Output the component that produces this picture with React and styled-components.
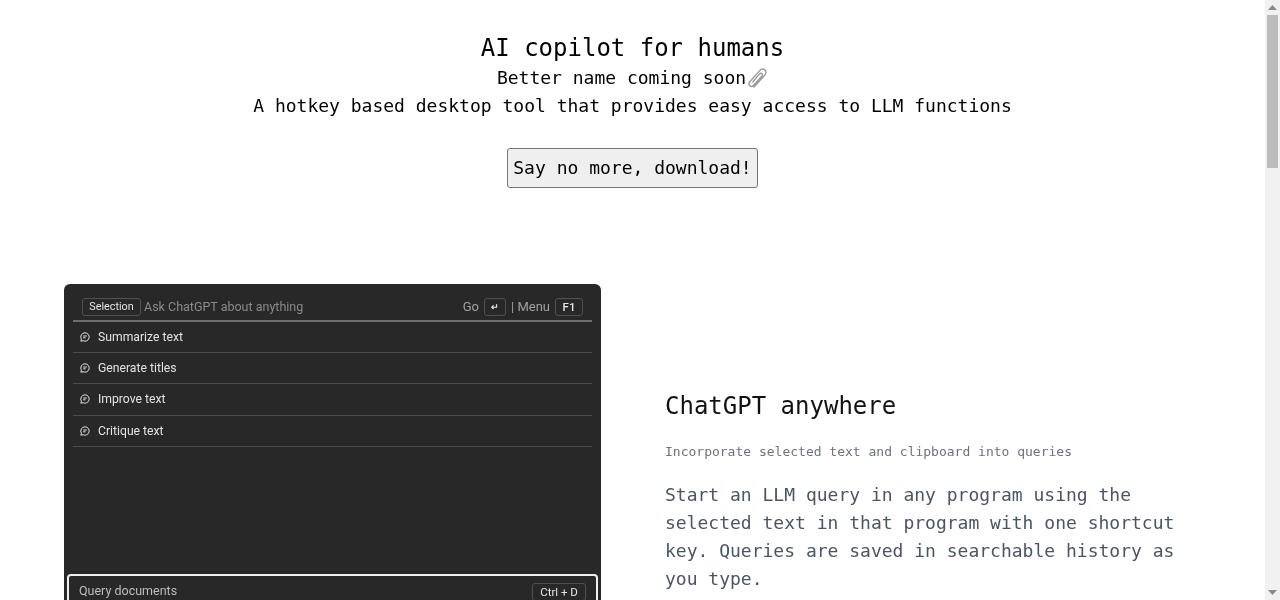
import React from 'react';
import styled, { createGlobalStyle } from 'styled-components';

const GlobalStyle = createGlobalStyle`
  body {
    margin: 0;
    background: #fff;
    font-family: "DejaVu Sans Mono", monospace;
  }
`;

// own layer so text gets greyscale antialiasing like the reference
const Page = styled.main`
  min-height: 2235px;
  padding-right: 15px;
  will-change: transform;
`;

// the page is taller than the window, so the scrollbar is part of the picture
const ScrollTrack = styled.div`
  position: fixed;
  top: 0;
  right: 0;
  bottom: 0;
  width: 15px;
  background: #f1f1f1;
  display: flex;
  flex-direction: column;
  align-items: center;
  justify-content: space-between;
`;

const ScrollArrow = styled.div`
  flex: 0 0 15px;
  width: 15px;
  display: flex;
  align-items: center;
  justify-content: center;
`;

const ScrollThumb = styled.div`
  flex: 1;
  width: 11px;
  display: flex;
  flex-direction: column;
`;

const ThumbBar = styled.div`
  height: 153px;
  background: #bcbcbc;
`;

const Hero = styled.header`
  padding-top: 32px;
  display: flex;
  flex-direction: column;
  align-items: center;
  color: #000;
`;

const Title = styled.h1`
  margin: 0;
  font-size: 24px;
  font-weight: 400;
  line-height: 32px;
`;

const Tagline = styled.p`
  margin: 0;
  font-size: 18px;
  line-height: 28px;
  display: flex;
  align-items: center;
`;

const DownloadButton = styled.button`
  margin-top: 28px;
  height: 40px;
  padding: 0 5px 2px;
  font-family: inherit;
  font-size: 18px;
  color: #000;
  background: #efefef;
  border: 1px solid #767676;
  border-radius: 3px;
`;

const Feature = styled.section`
  margin-top: 96px;
  padding: 0 0 0 64px;
  display: grid;
  grid-template-columns: 537px 1fr;
  column-gap: 64px;
`;

const Preview = styled.div`
  height: 480px;
  background: #282828;
  border-radius: 6px;
  padding: 8px 9px 0;
  font-family: Roboto, sans-serif;
  font-size: 12.5px;
  color: #d8d8d8;
  box-sizing: border-box;
  display: flex;
  flex-direction: column;
  overflow: hidden;
  filter: blur(0.3px);
`;

const SearchBar = styled.div`
  height: 30px;
  padding: 1px 9px 0;
  box-sizing: border-box;
  display: flex;
  align-items: center;
  justify-content: space-between;
  border-bottom: 2px solid #6e6e6e;
`;

const BarGroup = styled.div`
  display: flex;
  align-items: center;
  gap: 3px;
  color: #8a8a8a;
`;

const Hint = styled(BarGroup)`
  gap: 5px;
  font-size: 13px;
  color: #a0a0a0;
`;

const Key = styled.span`
  height: 18px;
  min-width: ${(p) => p.$width || 22}px;
  box-sizing: border-box;
  display: inline-flex;
  align-items: center;
  justify-content: center;
  border: 1px solid #505050;
  border-radius: 3px;
  font-size: ${(p) => p.$size || 11.5}px;
  font-weight: ${(p) => p.$weight || 400};
  color: #e4e4e4;
`;

const MenuRow = styled.div`
  height: 31.2px;
  padding: 0 7px;
  box-sizing: border-box;
  display: flex;
  align-items: center;
  gap: 8px;
  border-bottom: 1px solid #4c4c4c;
  font-size: 12.2px;
  color: #e2e2e2;
`;

const Filler = styled.div`
  flex: 0 0 127px;
`;

const QueryBox = styled.div`
  margin: 0 -6px;
  height: 60px;
  padding: 7px 10px 0 10px;
  box-sizing: border-box;
  display: flex;
  align-items: flex-start;
  justify-content: space-between;
  border: 2px solid #f0f0f0;
  border-radius: 4px;
  line-height: 16px;
  color: #bdbdbd;
`;

const FeatureText = styled.div`
  padding-top: 104px;
`;

const FeatureTitle = styled.h2`
  margin: 0;
  font-size: 24px;
  font-weight: 400;
  line-height: 36px;
  color: #111;
`;

const FeatureNote = styled.p`
  margin: 18px 0 0;
  font-size: 13px;
  line-height: 20px;
  color: #6b7280;
`;

const FeatureBody = styled.p`
  margin: 19px 0 0;
  max-width: 520px;
  font-size: 18px;
  line-height: 28px;
  color: #4b5563;
`;

const Paperclip = () => (
  <svg width="22" height="22" viewBox="0 0 22 22" fill="none" stroke="#9b9b9b" strokeWidth="1.4" strokeLinecap="round">
    <path d="M8 20 18.5 8.5c1.8-2 1.8-4.3.3-5.6s-3.4-1-5 .7L4 14.5c-1.3 1.5-1.3 3.2-.2 4.2s2.7.8 3.9-.5l8-9c.9-1 .9-2 .2-2.6s-1.7-.4-2.5.5L6.800 15" />
  </svg>
);

const ChatIcon = () => (
  <svg width="10" height="10" viewBox="0 0 10 10" fill="none" stroke="#e2e2e2" strokeWidth="1">
    <path d="M5 .8a4.200 4.200 0 1 1-2 7.900L.8 9.200l.6-2A4.200 4.200 0 0 1 5 .8Z" />
    <path d="M3.200 4h3.600M3.200 5.800h2.400" />
  </svg>
);

const Triangle = ({ down }) => (
  <svg width="9" height="5" viewBox="0 0 9 5" fill="#8a8a8a">
    <path d={down ? 'M0 0h9L4.500 5Z' : 'M0 5h9L4.500 0Z'} />
  </svg>
);

const actions = ['Summarize text', 'Generate titles', 'Improve text', 'Critique text'];

export default function App() {
  return (
    <>
      <GlobalStyle />
      <Page>
        <Hero>
          <Title>AI copilot for humans</Title>
          <Tagline>Better name coming soon<Paperclip /></Tagline>
          <Tagline>A hotkey based desktop tool that provides easy access to LLM functions</Tagline>
          <DownloadButton>Say no more, download!</DownloadButton>
        </Hero>
        <Feature>
          <Preview>
            <SearchBar>
              <BarGroup>
                <Key $width={59} $size={10.8}>Selection</Key>
                Ask ChatGPT about anything
              </BarGroup>
              <Hint>
                Go <Key $size={9} $weight={700}>↵</Key> | Menu <Key $width={28} $weight={500}>F1</Key>
              </Hint>
            </SearchBar>
            {actions.map((label) => (
              <MenuRow key={label}>
                <ChatIcon />
                {label}
              </MenuRow>
            ))}
            <Filler />
            <QueryBox>
              Query documents
              <Key $width={54}>Ctrl + D</Key>
            </QueryBox>
          </Preview>
          <FeatureText>
            <FeatureTitle>ChatGPT anywhere</FeatureTitle>
            <FeatureNote>Incorporate selected text and clipboard into queries</FeatureNote>
            <FeatureBody>
              Start an LLM query in any program using the selected text in that program with one
              shortcut key. Queries are saved in searchable history as you type.
            </FeatureBody>
          </FeatureText>
        </Feature>
      </Page>
      <ScrollTrack>
        <ScrollArrow><Triangle /></ScrollArrow>
        <ScrollThumb><ThumbBar /></ScrollThumb>
        <ScrollArrow><Triangle down /></ScrollArrow>
      </ScrollTrack>
    </>
  );
}
